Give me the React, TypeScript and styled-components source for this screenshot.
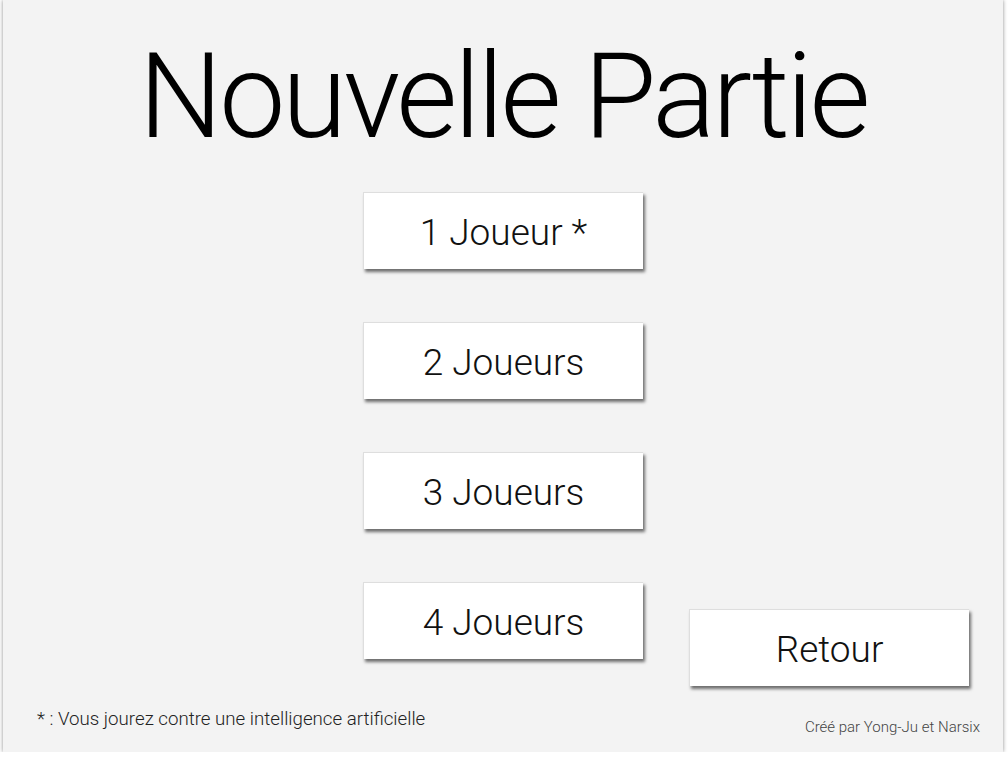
import React from "react";
import styled, { createGlobalStyle } from "styled-components";

const GlobalStyle = createGlobalStyle`
  html, body {
    margin: 0;
    padding: 0;
    background: #ffffff;
  }
  body {
    font-family: Roboto, "Liberation Sans", Arial, sans-serif;
  }
`;

const Panel = styled.div`
  box-sizing: border-box;
  width: 1000px;
  height: 752px;
  margin: 0 3px;
  background: #f3f3f3;
  box-shadow: 0 0 4px rgba(0, 0, 0, 0.45);
  display: flex;
  flex-direction: column;
`;

const Title = styled.h1`
  margin: 27px 0 0;
  height: 140px;
  font-size: 118px;
  font-weight: 300;
  line-height: 140px;
  letter-spacing: -3.3px;
  text-align: center;
  color: #000;
`;

const ButtonGrid = styled.div`
  display: grid;
  grid-template-columns: 360px 280px 46px 280px;
  grid-template-rows: repeat(4, 77px);
  row-gap: 53px;
  margin-top: 25px;
`;

const MenuButton = styled.button<{ $col: number; $row: number; $drop?: number }>`
  grid-column: ${(p) => p.$col};
  grid-row: ${(p) => p.$row};
  margin-top: ${(p) => p.$drop ?? 0}px;
  height: 77px;
  box-sizing: border-box;
  background: #ffffff;
  border: none;
  border-top: 1px solid #dedede;
  border-left: 1px solid #dedede;
  box-shadow: 2px 3px 3px rgba(0, 0, 0, 0.55);
  font-family: Roboto, "Liberation Sans", Arial, sans-serif;
  font-weight: 300;
  font-size: 37px;
  color: #111;
  padding: 2px 0 0;
  cursor: pointer;
`;

const Footer = styled.div`
  margin-top: auto;
  display: flex;
  justify-content: space-between;
  align-items: flex-end;
  padding: 0 23px 16px 34px;
`;

const Footnote = styled.span`
  font-size: 18.7px;
  font-weight: 300;
  color: #222;
  margin-bottom: 6px;
`;

const Credit = styled.span`
  font-size: 15px;
  font-weight: 300;
  color: #444;
`;

export default function App() {
  return (
    <>
      <GlobalStyle />
      <Panel>
        <Title>Nouvelle Partie</Title>
        <ButtonGrid>
          <MenuButton $col={2} $row={1}>1 Joueur *</MenuButton>
          <MenuButton $col={2} $row={2}>2 Joueurs</MenuButton>
          <MenuButton $col={2} $row={3}>3 Joueurs</MenuButton>
          <MenuButton $col={2} $row={4}>4 Joueurs</MenuButton>
          <MenuButton $col={4} $row={4} $drop={27}>Retour</MenuButton>
        </ButtonGrid>
        <Footer>
          <Footnote>* : Vous jourez contre une intelligence artificielle</Footnote>
          <Credit>Créé par Yong-Ju et Narsix</Credit>
        </Footer>
      </Panel>
    </>
  );
}
